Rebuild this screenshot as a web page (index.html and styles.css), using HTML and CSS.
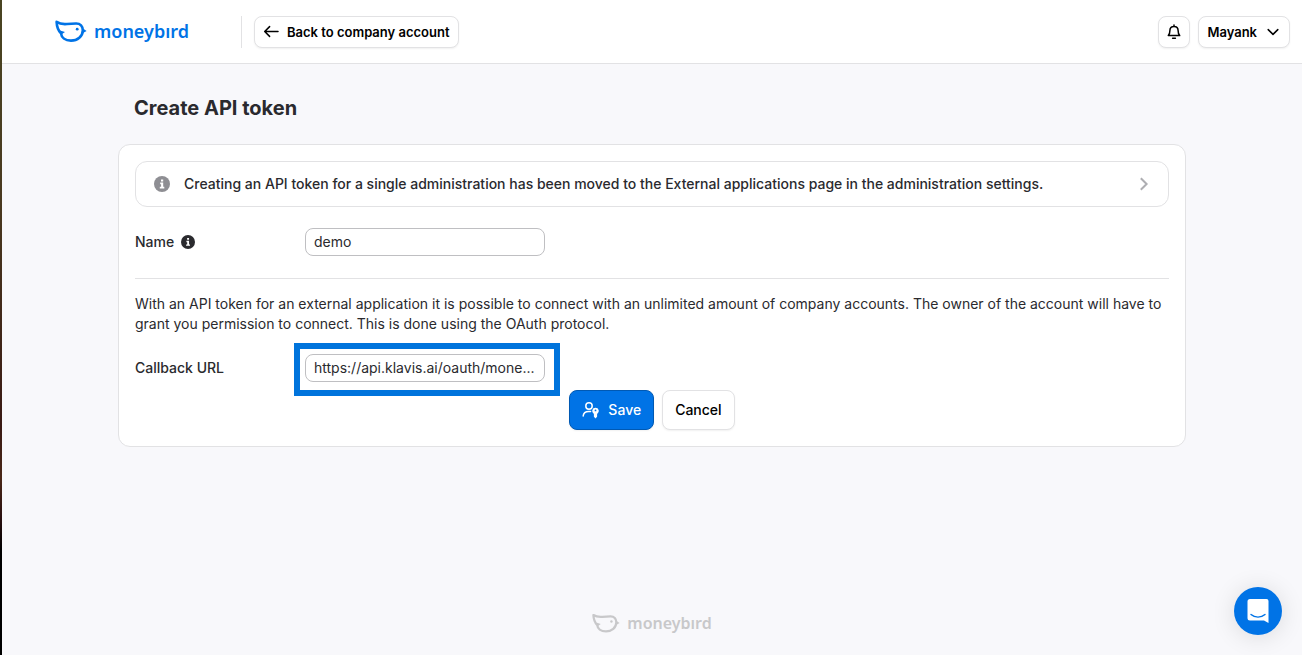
FILE: index.html
```html
<!DOCTYPE html>
<html lang="en">
<head>
    <meta charset="UTF-8">
    <meta name="viewport" content="width=device-width, initial-scale=1.0">
    <title>Create API token - Moneybird</title>
    <link rel="stylesheet" href="styles.css">
</head>
<body>
    <svg class="sprite" aria-hidden="true">
        <symbol id="bird" viewBox="0 0 32 22">
            <path d="M1.600 1.900C4.500 3.900 8 4.300 12 4L21 3.500C25.400 3.400 27.800 6.200 27.800 10.200C27.800 16.400 22.500 20.600 16 20.600C10 20.600 6.400 17.400 6 13.400C3.200 10.600 1.800 6.200 1.600 1.900Z" fill="none" stroke="currentColor" stroke-width="2.600" stroke-linejoin="round"/>
            <path d="M28 8.600L31.600 10.900L28 13ZM5 10.400L10 12L6.400 14.600Z" fill="currentColor"/>
            <circle cx="22.200" cy="9.200" r="1.400" fill="currentColor"/>
        </symbol>
        <symbol id="info" viewBox="0 0 16 16">
            <circle cx="8" cy="8" r="8" fill="currentColor"/>
            <path d="M7 3.4h2.2v2H7zM6.2 6.6h3v4.2h1.1v1.6H5.8v-1.6h1.3V8.2h-.9z" fill="#fff"/>
        </symbol>
    </svg>

    <header class="topbar">
        <a href="#" class="logo">
            <svg class="logo-bird"><use href="#bird"/></svg>
            <span>moneybırd</span>
        </a>
        <nav class="topbar-nav">
            <a href="#" class="btn btn-small">
                <svg width="16" height="16" viewBox="0 0 16 16" class="line-icon"><path d="M15 7.500H1.800M6.600 2.600L1.700 7.500L6.600 12.400"/></svg>
                Back to company account
            </a>
        </nav>
        <div class="topbar-user">
            <button type="button" class="btn btn-small btn-icon" aria-label="Notifications">
                <svg width="16" height="16" viewBox="0 0 16 16" class="line-icon"><path d="M2.300 11.600C3.600 10.200 3.900 8.800 3.900 6.600C3.900 4 5.600 2.400 8 2.400S12.100 4 12.100 6.600C12.100 8.800 12.400 10.200 13.700 11.600ZM8 2.400V1M6.600 14.200H9.400"/></svg>
            </button>
            <button type="button" class="btn btn-small">
                Mayank
                <svg width="16" height="16" viewBox="0 0 16 16" class="line-icon"><path d="M3.200 5.600L8 10.400L12.800 5.600"/></svg>
            </button>
        </div>
    </header>

    <main>
        <h1 class="title">Create API token</h1>

        <form class="card">
            <a href="#" class="notice">
                <svg class="notice-icon"><use href="#info"/></svg>
                <span class="notice-text">Creating an API token for a single administration has been moved to the External applications page in the administration settings.</span>
                <svg width="16" height="16" viewBox="0 0 16 16" class="notice-arrow"><path d="M4.800 2.200L10.600 8L4.800 13.800"/></svg>
            </a>

            <div class="field">
                <label for="name">Name <svg class="label-icon"><use href="#info"/></svg></label>
                <div class="control">
                    <input type="text" id="name" value="demo">
                </div>
            </div>

            <hr>

            <p>With an API token for an external application it is possible to connect with an unlimited amount of company accounts. The owner of the account will have to grant you permission to connect. This is done using the OAuth protocol.</p>

            <div class="field">
                <label for="callback">Callback URL</label>
                <div class="control highlight">
                    <input type="text" id="callback" value="https://api.klavis.ai/oauth/mone...">
                </div>
            </div>

            <div class="actions">
                <button type="submit" class="btn btn-primary">
                    <svg width="18" height="18" viewBox="0 0 18 18">
                        <g fill="none" stroke="currentColor" stroke-width="1.500" stroke-linecap="round">
                            <circle cx="7" cy="5" r="3.200"/>
                            <path d="M1.200 15C1.400 12 3.400 10.400 6.800 10.400H8.600"/>
                        </g>
                        <path d="M13.500 6.800a3.300 3.300 0 0 0-1.600 6.200V15.800L13.500 17.400L15.100 15.800V13a3.300 3.300 0 0 0-1.600-6.200z" fill="currentColor"/>
                        <circle cx="13.500" cy="9.400" r="0.900" fill="#0073e6"/>
                    </svg>
                    Save
                </button>
                <button type="button" class="btn">Cancel</button>
            </div>
        </form>
    </main>

    <footer>
        <div class="logo logo-muted">
            <svg class="logo-bird"><use href="#bird"/></svg>
            <span>moneybırd</span>
        </div>
    </footer>

    <button type="button" class="chat" aria-label="Open chat">
        <svg width="24" height="26" viewBox="0 0 24 26">
            <path d="M4 1H20.500A2 2 0 0 1 22.500 3V25L18 22.500H4A2.500 2.500 0 0 1 1.500 20V3.500A2.500 2.500 0 0 1 4 1Z" fill="#fff"/>
            <path d="M5 16.500C9 20 15 20 19 16.500" fill="none" stroke="#0073e6" stroke-width="1.400" stroke-linecap="round"/>
        </svg>
    </button>
</body>
</html>
```

FILE: styles.css
```css
:root {
    --primary: #0073e6;
    --background: #f8f8fb;
    --border: #e2e2e4;
    --input-border: #bfbfc2;
    --text: #2a2a2e;
    --muted: #c8c8ca;
}
* {
    margin: 0;
    padding: 0;
    box-sizing: border-box;
}
body {
    display: flex;
    flex-direction: column;
    min-height: 100vh;
    border-left: 2px solid;
    border-image: linear-gradient(#4a4522, #4a3a20 30%, #3a1a14 65%, #4a2818 73%, #2a1010 79%, #000 84%) 1;
    font-family: Inter, "Liberation Sans", sans-serif;
    font-size: 14px;
    line-height: 20px;
    background: var(--background);
    color: var(--text);
}
a {
    color: inherit;
    text-decoration: none;
}
.sprite {
    display: none;
}
.topbar {
    display: flex;
    align-items: center;
    height: 64px;
    padding: 0 12px 0 53px;
    background: #fff;
    border-bottom: 1px solid var(--border);
}
.logo {
    display: flex;
    align-items: center;
    gap: 7px;
    padding-bottom: 2px;
    color: var(--primary);
    font-family: "Noto Sans", sans-serif;
    font-size: 18px;
    font-weight: 600;
}
.logo-bird {
    width: 32px;
    height: 22px;
}
.topbar-nav {
    margin-left: 52px;
    padding-left: 12px;
    border-left: 1px solid var(--border);
}
.topbar-user {
    display: flex;
    gap: 8px;
    margin-left: auto;
}
.btn {
    display: flex;
    align-items: center;
    justify-content: center;
    gap: 8px;
    height: 40px;
    padding: 0 12px 1px;
    border: 1px solid var(--border);
    border-radius: 8px;
    box-shadow: 0 1px 2px rgba(0, 0, 0, 0.06);
    background: #fff;
    color: #000;
    font-family: inherit;
    font-size: 14px;
    font-weight: 500;
}
.btn-small {
    height: 32px;
    padding: 0 8px;
    font-size: 13px;
    font-weight: 600;
}
.btn-icon {
    width: 32px;
    padding: 0;
}
.btn-primary {
    border-color: #0059b3;
    background: var(--primary);
    color: #fff;
}
.line-icon {
    fill: none;
    stroke: currentColor;
    stroke-width: 1.5;
    stroke-linecap: round;
    stroke-linejoin: round;
}
main {
    width: 100%;
    max-width: 1068px;
    margin: 0 auto;
}
.title {
    padding: 30px 16px 22px;
    font-size: 20px;
    line-height: 28px;
    font-weight: 700;
}
.card {
    padding: 16px;
    border: 1px solid var(--border);
    border-radius: 12px;
    background: #fff;
}
.notice {
    display: flex;
    align-items: center;
    gap: 14px;
    padding: 12px 16px 12px 18px;
    border: 1px solid var(--border);
    border-radius: 12px;
    font-weight: 500;
}
.notice-icon {
    width: 16px;
    height: 16px;
    color: #8e8e93;
}
.notice-text {
    flex: 1;
}
.notice-arrow {
    fill: none;
    stroke: #aeaeb2;
    stroke-width: 2;
}
.field {
    display: flex;
    align-items: center;
}
.field label {
    display: flex;
    align-items: center;
    gap: 7px;
    width: 170px;
    font-weight: 500;
}
.label-icon {
    width: 14px;
    height: 14px;
}
.notice + .field {
    margin-top: 21px;
}
.control {
    position: relative;
    width: 240px;
}
.control input {
    display: block;
    width: 100%;
    height: 28px;
    padding: 0 8px 1px;
    border: 1px solid var(--input-border);
    border-radius: 8px;
    background: #fff;
    color: var(--text);
    font-family: inherit;
    font-size: 14px;
}
.highlight::after {
    content: "";
    position: absolute;
    inset: -11px -15px -14px -11px;
    border: 6px solid #0074dc;
    pointer-events: none;
}
hr {
    margin: 22px 0 15px;
    border: 0;
    border-top: 1px solid var(--border);
}
p {
    margin-bottom: 20px;
}
.actions {
    display: flex;
    justify-content: center;
    gap: 8px;
    margin-top: 8px;
}
footer {
    display: flex;
    justify-content: center;
    margin-top: auto;
    padding: 22px;
}
.logo-muted {
    padding-bottom: 0;
    color: var(--muted);
    font-size: 16px;
}
.logo-muted .logo-bird {
    width: 28px;
    height: 20px;
}
.chat {
    position: fixed;
    right: 20px;
    bottom: 20px;
    display: flex;
    align-items: center;
    justify-content: center;
    width: 48px;
    height: 48px;
    border: 0;
    border-radius: 50%;
    background: var(--primary);
    box-shadow: 0 2px 24px rgba(0, 0, 0, 0.12);
}
```
